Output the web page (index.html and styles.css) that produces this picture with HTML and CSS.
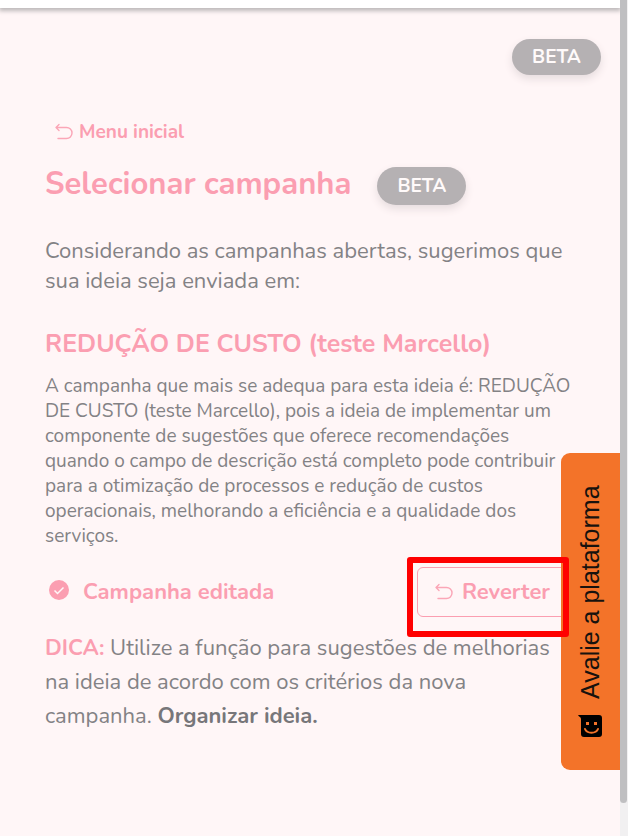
FILE: index.html
```html
<!DOCTYPE html>
<html lang="pt-BR">
<head>
<meta charset="utf-8">
<title>Selecionar campanha</title>
<link rel="stylesheet" href="styles.css">
</head>
<body>
<div class="app">
  <header class="topbar"></header>
  <main class="panel">
    <div class="panel-top"><span class="badge">BETA</span></div>
    <a class="back" href="#">
      <svg class="undo" viewBox="0 0 18 18" aria-hidden="true"><path d="M4 1.500 1 4.500l3 3M1 4.500h10.500a5.500 5.500 0 0 1 0 11H3"/></svg>
      Menu inicial
    </a>
    <div class="title-row">
      <h1>Selecionar campanha</h1>
      <span class="badge badge-title">BETA</span>
    </div>
    <p class="intro">Considerando as campanhas abertas, sugerimos que<br>sua ideia seja enviada em:</p>
    <h2>REDUÇÃO DE CUSTO (teste Marcello)</h2>
    <p class="reason">A campanha que mais se adequa para esta ideia é: REDUÇÃO<br>DE CUSTO (teste Marcello), pois a ideia de implementar um<br>componente de sugestões que oferece recomendações<br>quando o campo de descrição está completo pode contribuir<br>para a otimização de processos e redução de custos<br>operacionais, melhorando a eficiência e a qualidade dos<br>serviços.</p>
    <div class="status-row">
      <svg class="check" viewBox="0 0 20 20" aria-hidden="true"><circle cx="10" cy="10" r="10"/><path d="m5.500 10.500 3 3 6-6"/></svg>
      <strong class="status">Campanha editada</strong>
      <div class="revert-wrap">
        <button class="revert" type="button">
          <svg class="undo" viewBox="0 0 18 18" aria-hidden="true"><path d="M4 1.500 1 4.500l3 3M1 4.500h10.500a5.500 5.500 0 0 1 0 11H3"/></svg>
          Reverter
        </button>
        <span class="highlight"></span>
      </div>
    </div>
    <p class="tip"><strong class="tip-label">DICA:</strong> Utilize a função para sugestões de melhorias<br>na ideia de acordo com os critérios da nova<br>campanha. <strong>Organizar ideia.</strong></p>
  </main>
  <button class="feedback" type="button">
    <svg class="smile" viewBox="0 0 24 24" aria-hidden="true"><path class="bubble" d="M0 1h21a3 3 0 0 1 3 3v16a3 3 0 0 1-3 3H6a3 3 0 0 1-3-3V5C3 3 1 3 0 1z"/><path class="face" d="M7 15c2 5 11 5 13 0"/><path class="eyes" d="M8 8h3v3H8zM16 8h3v3h-3z"/></svg>
    <span>Avalie a plataforma</span>
  </button>
  <div class="scroll-track"><div class="scroll-thumb"></div></div>
</div>
</body>
</html>
```
FILE: styles.css
```css
* {
  box-sizing: border-box;
}

body {
  margin: 0;
  background: #fff6f7;
  color: #838285;
  font-family: Nunito, Lato, "Open Sans", sans-serif;
}

h1,
h2,
p {
  margin: 0;
}

.app {
  position: relative;
  min-height: 100vh;
  overflow: hidden;
  padding-right: 8px;
}

.topbar {
  height: 8px;
  background: #fff;
  box-shadow: 0 2px 4px 1px #bdb9ba;
}

.panel {
  padding: 31px 19px 0 45px;
  white-space: nowrap;
}

.panel-top {
  display: flex;
  justify-content: flex-end;
}

.badge {
  display: flex;
  align-items: center;
  justify-content: center;
  width: 89px;
  height: 36px;
  border-radius: 18px;
  background: #b5b1b3;
  box-shadow: 0 4px 8px #e6dcde;
  color: #fffafa;
  font-size: 19px;
  font-weight: 700;
}

.badge-title {
  height: 38px;
  border-radius: 19px;
}

.back {
  display: flex;
  align-items: center;
  gap: 6px;
  width: max-content;
  height: 24px;
  margin: 45px 0 0 10px;
  color: #fb9eb1;
  font-size: 19px;
  font-weight: 700;
  text-decoration: none;
}

.undo {
  width: 18px;
  height: 18px;
  fill: none;
  stroke: #fba6b7;
  stroke-width: 1.4;
  stroke-linecap: round;
  stroke-linejoin: round;
}

.title-row {
  display: flex;
  align-items: center;
  gap: 26px;
  margin-top: 22px;
}

h1 {
  color: #fb9eb1;
  font-size: 31px;
  line-height: 36px;
  padding-bottom: 4px;
}

.intro {
  margin-top: 30px;
  font-size: 22px;
  line-height: 30px;
}

h2 {
  margin-top: 32px;
  color: #fb9eb1;
  font-size: 25px;
  line-height: 32px;
}

.reason {
  margin-top: 14px;
  font-size: 19px;
  line-height: 25px;
}

.status-row {
  display: flex;
  align-items: center;
  height: 50px;
  margin-top: 18px;
  padding-left: 4px;
}

.check {
  width: 20px;
  height: 20px;
  margin: 0 14px 4px 0;
  fill: #fb9eb1;
}

.check path {
  fill: none;
  stroke: #fff6f7;
  stroke-width: 1.5;
}

.status {
  color: #fb9eb1;
  font-size: 22px;
}

.revert-wrap {
  position: relative;
  margin-left: auto;
  margin-right: 32px;
}

.revert {
  display: flex;
  align-items: center;
  gap: 9px;
  width: 152px;
  height: 50px;
  padding: 0 0 0 17px;
  border: 1px solid #fb9eb1;
  border-radius: 6px;
  background: transparent;
  color: #fb9eb1;
  font: inherit;
  font-size: 22px;
  font-weight: 700;
}

.highlight {
  position: absolute;
  z-index: 2;
  top: -10px;
  left: -10px;
  width: 162px;
  height: 80px;
  border: 6px solid #f00;
  border-radius: 3px;
  pointer-events: none;
}

.tip {
  margin-top: 14px;
  font-size: 22px;
  line-height: 34px;
}

.tip strong {
  color: #77767a;
}

.tip .tip-label {
  color: #fb9eb1;
}

.feedback {
  position: absolute;
  z-index: 1;
  top: 453px;
  right: 8px;
  display: flex;
  align-items: center;
  gap: 15px;
  width: 59px;
  height: 317px;
  padding: 32px 0;
  border: 0;
  border-radius: 0 9px 9px 0;
  background: #f37329;
  color: #17120e;
  font-family: "Liberation Sans", sans-serif;
  font-size: 25px;
  white-space: nowrap;
  writing-mode: vertical-rl;
  transform: rotate(180deg);
}

.smile {
  flex: none;
  width: 24px;
  height: 24px;
  transform: rotate(180deg);
}

.bubble {
  fill: #000;
}

.eyes {
  fill: #f37329;
}

.face {
  fill: none;
  stroke: #f37329;
  stroke-width: 2;
  stroke-linecap: round;
}

.scroll-track {
  position: absolute;
  z-index: 3;
  top: 0;
  right: 0;
  bottom: 0;
  width: 8px;
  background: #f1f0f1;
}

.scroll-thumb {
  width: 7px;
  height: 96%;
  border-radius: 0 0 4px 4px;
  background: #bfbfc1;
}
```
